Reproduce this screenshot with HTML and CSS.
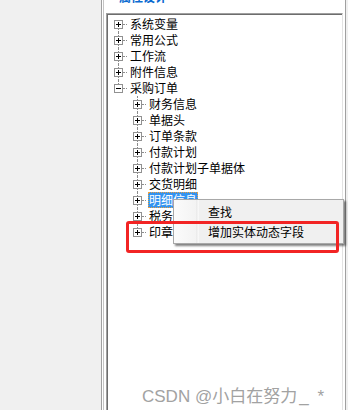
FILE: index.html
```html
<!DOCTYPE html>
<html lang="zh-CN">
<head>
    <meta charset="UTF-8">
    <title>树形设计</title>
    <link rel="stylesheet" href="styles.css">
</head>
<body>
    <div class="window">
        <div class="side"></div>
        <div class="panel">
            <div class="inner">
                <div class="caption"><span>属性设计</span></div>
                <div class="tree">
                    <div class="row first"><span class="twig"><span class="exp plus"></span></span><span class="label">系统变量</span></div>
                    <div class="row"><span class="twig"><span class="exp plus"></span></span><span class="label">常用公式</span></div>
                    <div class="row"><span class="twig"><span class="exp plus"></span></span><span class="label">工作流</span></div>
                    <div class="row"><span class="twig"><span class="exp plus"></span></span><span class="label">附件信息</span></div>
                    <div class="row last"><span class="twig"><span class="exp"></span></span><span class="label">采购订单</span></div>
                    <div class="row"><span class="indent"></span><span class="twig"><span class="exp plus"></span></span><span class="label">财务信息</span></div>
                    <div class="row"><span class="indent"></span><span class="twig"><span class="exp plus"></span></span><span class="label">单据头</span></div>
                    <div class="row"><span class="indent"></span><span class="twig"><span class="exp plus"></span></span><span class="label">订单条款</span></div>
                    <div class="row"><span class="indent"></span><span class="twig"><span class="exp plus"></span></span><span class="label">付款计划</span></div>
                    <div class="row"><span class="indent"></span><span class="twig"><span class="exp plus"></span></span><span class="label">付款计划子单据体</span></div>
                    <div class="row"><span class="indent"></span><span class="twig"><span class="exp plus"></span></span><span class="label">交货明细</span></div>
                    <div class="row"><span class="indent"></span><span class="twig"><span class="exp plus"></span></span><span class="label selected">明细信息</span></div>
                    <div class="row"><span class="indent"></span><span class="twig"><span class="exp plus"></span></span><span class="label">税务信息</span></div>
                    <div class="row last"><span class="indent"></span><span class="twig"><span class="exp plus"></span></span><span class="label">印章信息</span></div>
                </div>
            </div>
        </div>
        <div class="edge"></div>
    </div>

    <div class="menu">
        <div class="item">查找</div>
        <div class="item">增加实体动态字段</div>
    </div>
    <div class="mark"></div>
    <div class="watermark">CSDN @小白在努力<span class="tail">_*</span></div>
</body>
</html>
```

FILE: styles.css
```css
body {
    margin: 0;
    background: #f0f0f0;
    font-family: "Noto Sans CJK SC", sans-serif;
    font-size: 12px;
    color: #000;
    overflow: hidden;
}

.window {
    display: flex;
    height: 410px;
}

.side {
    width: 101px;
    flex: none;
}

.panel {
    width: 245px;
    flex: none;
    box-sizing: border-box;
    display: flex;
    background: #fff;
    border-left: 1px solid #a0a0a0;
    border-right: 1px solid #a0a0a0;
    padding: 0 2px 0 1px;
}

.inner {
    flex: 1;
    display: flex;
    flex-direction: column;
    border-left: 1px solid #c4c4c4;
    padding-left: 2px;
}

.caption {
    height: 13px;
    overflow: hidden;
    padding-left: 13px;
}

.caption span {
    display: block;
    margin-top: -9px;
    line-height: 12px;
    color: #0a6ad0;
    font-weight: bold;
}

.tree {
    flex: 1;
    border-top: 1px solid #a0a0a0;
    border-left: 1px solid #a0a0a0;
    border-right: 1px solid #e3e3e3;
    box-shadow: inset 1px 1px 0 #6d6d6d;
    padding: 2px 0 0 2px;
}

.edge {
    width: 2px;
    flex: none;
}

.row {
    display: flex;
    align-items: center;
    height: 16px;
    white-space: nowrap;
}

.indent {
    width: 19px;
    height: 16px;
    flex: none;
}

.twig {
    position: relative;
    width: 19px;
    height: 16px;
    flex: none;
}

.twig::before {
    content: '';
    position: absolute;
    left: 9px;
    top: 0;
    bottom: 0;
    border-left: 1px dotted #8c8c8c;
}

.first .twig::before {
    top: 8px;
}

.last .twig::before {
    bottom: 8px;
}

.twig::after {
    content: '';
    position: absolute;
    left: 14px;
    top: 8px;
    width: 4px;
    border-top: 1px dotted #8c8c8c;
}

.exp {
    position: relative;
    z-index: 1;
    display: block;
    box-sizing: border-box;
    width: 9px;
    height: 9px;
    margin: 4px 0 0 5px;
    border: 1px solid #919191;
    background: linear-gradient(#000, #000) center / 5px 1px no-repeat, #fff;
}

.exp.plus {
    background: linear-gradient(#000, #000) center / 5px 1px no-repeat,
                linear-gradient(#000, #000) center / 1px 5px no-repeat, #fff;
}

.label {
    margin-left: 1px;
    padding: 0 1px;
    line-height: 16px;
    height: 16px;
    box-sizing: border-box;
}

.label.selected {
    background: #3393f0;
    color: #fff;
    outline: 1px dotted #f0a040;
    outline-offset: -1px;
}

.menu {
    position: absolute;
    left: 173px;
    top: 199px;
    width: 171px;
    height: 45px;
    box-sizing: border-box;
    padding: 2px;
    border: 1px solid #a8a8a8;
    background: linear-gradient(to right, #fbfbfb 0, #f3f3f3 22px, #e4e4e4 23px, #fff 24px, #f0f0f0 25px);
    box-shadow: 2px 2px 2px rgba(0, 0, 0, 0.5);
}

.menu .item {
    height: 20px;
    line-height: 20px;
    padding-left: 32px;
}

.mark {
    position: absolute;
    left: 126px;
    top: 221px;
    width: 213px;
    height: 32px;
    box-sizing: border-box;
    border: 3px solid #f22424;
    border-radius: 3px;
}

.watermark {
    position: absolute;
    left: 142px;
    top: 382px;
    font-family: "Liberation Sans", "Noto Sans CJK SC", sans-serif;
    font-size: 17px;
    color: #a2a2a2;
    white-space: nowrap;
}

.watermark .tail {
    letter-spacing: 9px;
    margin-left: 2px;
}
```
